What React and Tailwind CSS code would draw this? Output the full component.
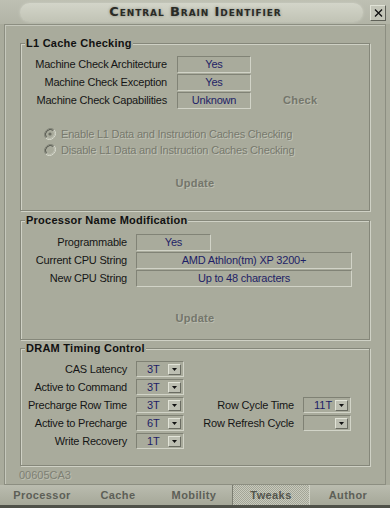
import React from "react";

function Group({ title, className, children }) {
  return (
    <fieldset
      className={`w-[350px] border border-[#85877a] shadow-[inset_1px_1px_0_#cfd1c5,1px_1px_0_#cfd1c5] ${className}`}
    >
      <legend className="ml-[4px] px-[1px] bg-[#a9ab9c] font-bold text-[11px] leading-[14px] tracking-[0.25px] text-[#111]">
        {title}
      </legend>
      {children}
    </fieldset>
  );
}

function Label({ children }) {
  return <span className="text-right whitespace-nowrap tracking-[-0.2px]">{children}</span>;
}

function Value({ children, className = "" }) {
  return (
    <div
      className={`h-[17px] flex items-center justify-center border border-t-[#818376] border-l-[#818376] border-b-[#d1d3c7] border-r-[#d1d3c7] text-[#1e1e66] whitespace-nowrap tracking-[-0.2px] ${className}`}
    >
      {children}
    </div>
  );
}

function Select({ value }) {
  return (
    <div className="h-[16px] w-[48px] flex items-center border border-t-[#7f8174] border-l-[#7f8174] border-b-[#d2d4c8] border-r-[#d2d4c8]">
      <span className="flex-1 pl-[10px] text-[#1e1e66] leading-none">{value}</span>
      <span className="mr-[2px] w-[13px] h-[11px] flex items-center justify-center bg-[#bdbfb2] border border-t-[#e2e4d8] border-l-[#e2e4d8] border-b-[#6a6c62] border-r-[#6a6c62]">
        <svg width="5" height="3" viewBox="0 0 5 3">
          <path d="M0 0h5L2.5 3z" fill="#111" />
        </svg>
      </span>
    </div>
  );
}

function Radio({ checked, label }) {
  return (
    <div className="h-[16px] flex items-center gap-[5px]">
      <svg width="12" height="12" viewBox="0 0 12 12">
        <path d="M10.2 1.8A6 6 0 0 0 1.8 10.2" fill="none" stroke="#86887c" strokeWidth="1" />
        <path d="M1.8 10.2A6 6 0 0 0 10.2 1.8" fill="none" stroke="#d6d8cc" strokeWidth="1" />
        <path d="M9.5 2.5A5 5 0 0 0 2.5 9.5" fill="none" stroke="#55574f" strokeWidth="1" />
        <path d="M2.5 9.5A5 5 0 0 0 9.5 2.5" fill="none" stroke="#bfc1b4" strokeWidth="1" />
        {checked && <circle cx="6" cy="6" r="1.6" fill="#6b6d63" />}
      </svg>
      <span className="text-[#77796d] tracking-[-0.2px] [text-shadow:1px_1px_0_#c2c4b8]">{label}</span>
    </div>
  );
}

function Disabled({ children, className = "" }) {
  return (
    <div className={`font-bold leading-[14px] tracking-[0.25px] text-[#74766b] [text-shadow:1px_1px_0_#bcbeb1] ${className}`}>
      {children}
    </div>
  );
}

const tabs = ["Processor", "Cache", "Mobility", "Tweaks", "Author"];

export default function App() {
  return (
    <div className="w-[390px] h-[508px] bg-[#a9ab9c] flex flex-col overflow-hidden font-['Liberation_Sans',Arial,sans-serif] text-[11px] text-[#151515] select-none">
      {/* title bar */}
      <div className="h-[24px] shrink-0 flex items-center pl-[20px] pr-[4px] bg-gradient-to-b from-[#bec0b3] to-[#b2b4a6]">
        <div className="flex-1 h-[19px] rounded-full bg-gradient-to-b from-[#d3d5c9] to-[#c1c3b5] shadow-[0_0_3px_#cdcfc3] flex items-center justify-center pl-[8px]">
          <span className="font-['DejaVu_Sans',sans-serif] font-bold text-[13px] [font-variant-caps:small-caps] tracking-[0.9px] text-[#2a2b26] [text-shadow:0_0_3px_rgba(0,0,0,0.35)]">
            Central Brain Identifier
          </span>
        </div>
        <div className="ml-[7px] mt-[2px] w-[16px] h-[16px] flex items-center justify-center bg-[#c3c5b8] border border-t-[#e0e2d6] border-l-[#e0e2d6] border-b-[#5f6158] border-r-[#5f6158]">
          <svg width="9" height="8" viewBox="0 0 9 8">
            <path d="M1 0.5L8 7.5M8 0.5L1 7.5" stroke="#111" strokeWidth="1.3" />
          </svg>
        </div>
      </div>

      {/* main panel */}
      <div className="mx-[4px] h-[461px] shrink-0 border border-[#8c8e81] shadow-[inset_1px_1px_0_#c6c8bc] pt-[11px] px-[15px] flex flex-col">
        <Group title="L1 Cache Checking" className="pb-[20px]">
          <div className="mt-[5px] grid grid-cols-[146px_74px_auto] gap-x-[10px] auto-rows-[18px] items-center">
            <Label>Machine Check Architecture</Label>
            <Value>Yes</Value>
            <div />
            <Label>Machine Check Exception</Label>
            <Value>Yes</Value>
            <div />
            <Label>Machine Check Capabilities</Label>
            <Value>Unknown</Value>
            <Disabled className="ml-[22px]">Check</Disabled>
          </div>
          <div className="mt-[17px] pl-[23px] flex flex-col">
            <Radio checked label="Enable L1 Data and Instruction Caches Checking" />
            <Radio label="Disable L1 Data and Instruction Caches Checking" />
          </div>
          <Disabled className="mt-[18px] text-center">Update</Disabled>
        </Group>

        <Group title="Processor Name Modification" className="mt-[2px] pb-[14px]">
          <div className="mt-[6px] grid grid-cols-[106px_216px] gap-x-[9px] auto-rows-[18px] items-center">
            <Label>Programmable</Label>
            <Value className="w-[75px]">Yes</Value>
            <Label>Current CPU String</Label>
            <Value>AMD Athlon(tm) XP 3200+</Value>
            <Label>New CPU String</Label>
            <Value>Up to 48 characters</Value>
          </div>
          <Disabled className="mt-[24px] text-center">Update</Disabled>
        </Group>

        <Group title="DRAM Timing Control" className="mt-[1px] pb-[15px]">
          <div className="mt-[5px] grid grid-cols-[106px_48px_101px_48px] gap-x-[9px] auto-rows-[18px] items-center">
            <Label>CAS Latency</Label>
            <Select value="3T" />
            <div />
            <div />
            <Label>Active to Command</Label>
            <Select value="3T" />
            <div />
            <div />
            <Label>Precharge Row Time</Label>
            <Select value="3T" />
            <Label>Row Cycle Time</Label>
            <Select value="11T" />
            <Label>Active to Precharge</Label>
            <Select value="6T" />
            <Label>Row Refresh Cycle</Label>
            <Select value="" />
            <Label>Write Recovery</Label>
            <Select value="1T" />
            <div />
            <div />
          </div>
        </Group>

        <div className="mt-[2px] -ml-[1px] leading-[14px] text-[#7e8074] [text-shadow:1px_1px_0_#bdbfb2]">00605CA3</div>
      </div>

      {/* tabs */}
      <div className="h-[20px] shrink-0 flex px-[4px] bg-gradient-to-b from-[#babcaf] to-[#a6a899]">
        {tabs.map((t) =>
          t === "Tweaks" ? (
            <div
              key={t}
              className="flex-1 text-center font-bold tracking-[0.4px] leading-[20px] text-[#53554d] border-l border-l-[#7c7e72] border-r border-r-[#d0d2c6] bg-[repeating-conic-gradient(#c8cabd_0%_25%,#a3a597_0%_50%)] bg-[length:2px_2px]"
            >
              {t}
            </div>
          ) : (
            <div key={t} className="flex-1 text-center font-bold tracking-[0.4px] leading-[20px] text-[#5d5f57]">
              {t}
            </div>
          )
        )}
      </div>
      <div className="flex-1 bg-[#4f5149]" />
    </div>
  );
}
